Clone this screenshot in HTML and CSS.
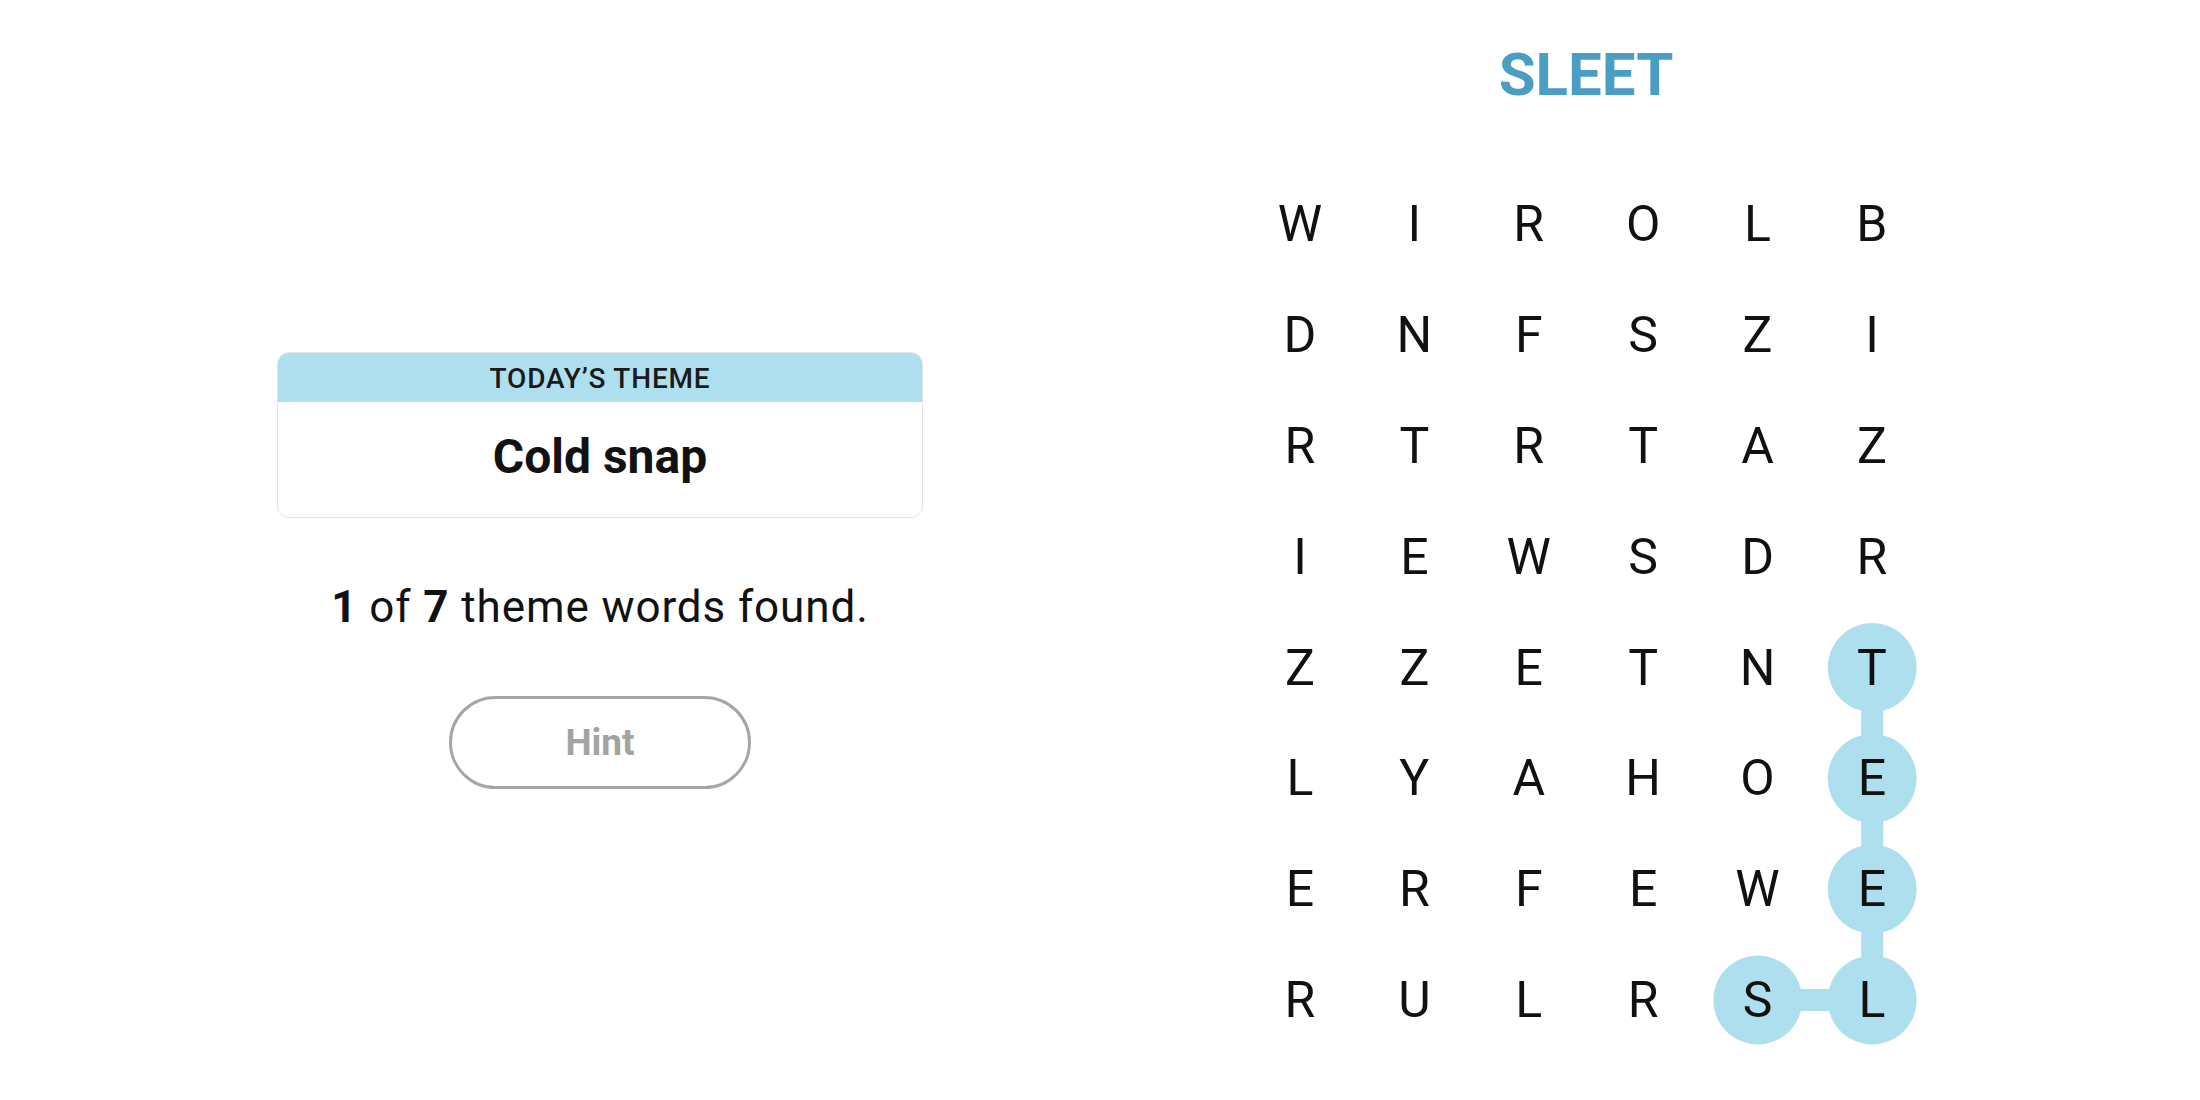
FILE: index.html
```html
<!DOCTYPE html>
<html lang="en">
<head>
<meta charset="utf-8">
<title>Strands</title>
<link rel="stylesheet" href="styles.css">
</head>
<body>
<main class="page">
  <section class="left">
    <div class="theme-card">
      <div class="theme-head">TODAY’S THEME</div>
      <div class="theme-body">Cold snap</div>
    </div>
    <p class="progress"><b>1</b> of <b>7</b> theme words found.</p>
    <button class="hint" type="button">Hint</button>
  </section>
  <section class="right">
    <h1 class="word">SLEET</h1>
    <div class="board">
      <svg class="path" width="686.4" height="886.4" viewBox="0 0 686.4 886.4" aria-hidden="true">
        <polyline points="629.2,498.6 629.2,831 514.8,831" fill="none" stroke="#aedfee" stroke-width="22"/>
        <circle cx="629.2" cy="498.6" r="44.5" fill="#aedfee"/>
        <circle cx="629.2" cy="609.4" r="44.5" fill="#aedfee"/>
        <circle cx="629.2" cy="720.2" r="44.5" fill="#aedfee"/>
        <circle cx="629.2" cy="831" r="44.5" fill="#aedfee"/>
        <circle cx="514.8" cy="831" r="44.5" fill="#aedfee"/>
      </svg>
      <div class="grid">
        <span>W</span><span>I</span><span>R</span><span>O</span><span>L</span><span>B</span>
        <span>D</span><span>N</span><span>F</span><span>S</span><span>Z</span><span>I</span>
        <span>R</span><span>T</span><span>R</span><span>T</span><span>A</span><span>Z</span>
        <span>I</span><span>E</span><span>W</span><span>S</span><span>D</span><span>R</span>
        <span>Z</span><span>Z</span><span>E</span><span>T</span><span>N</span><span>T</span>
        <span>L</span><span>Y</span><span>A</span><span>H</span><span>O</span><span>E</span>
        <span>E</span><span>R</span><span>F</span><span>E</span><span>W</span><span>E</span>
        <span>R</span><span>U</span><span>L</span><span>R</span><span>S</span><span>L</span>
      </div>
    </div>
  </section>
</main>
</body>
</html>
```

FILE: styles.css
```css
* { box-sizing: border-box; }

html, body {
  margin: 0;
  padding: 0;
  background: #ffffff;
}

body {
  width: 2200px;
  height: 1100px;
  overflow: hidden;
  font-family: Roboto, "Liberation Sans", Arial, sans-serif;
  color: #121212;
}

.page {
  display: flex;
  width: 2200px;
  height: 1100px;
}

.left {
  width: 1200px;
  display: flex;
  flex-direction: column;
  align-items: center;
  padding-top: 352px;
}

.theme-card {
  width: 646px;
  height: 166px;
  border: 1.5px solid #e3e3e3;
  border-radius: 12px;
  overflow: hidden;
  display: flex;
  flex-direction: column;
}

.theme-head {
  height: 49px;
  background: #aedfee;
  display: flex;
  align-items: center;
  justify-content: center;
  font-size: 28px;
  font-weight: 500;
  letter-spacing: 0.8px;
  color: #1a1a1a;
  padding-top: 2px;
}

.theme-body {
  flex: 1;
  display: flex;
  align-items: center;
  justify-content: center;
  font-size: 48px;
  font-weight: 700;
  color: #121212;
  padding-bottom: 6px;
}

.progress {
  margin: 64px 0 0;
  font-size: 44px;
  line-height: 51px;
  letter-spacing: 0.9px;
  color: #121212;
}

.progress b {
  font-weight: 700;
}

.hint {
  margin-top: 63px;
  width: 302px;
  height: 93px;
  border: 3px solid #a6a6a6;
  border-radius: 47px;
  background: #ffffff;
  font-family: Roboto, "Liberation Sans", Arial, sans-serif;
  font-size: 37px;
  font-weight: 700;
  color: #a3a3a3;
  padding: 0;
}

.right {
  width: 772px;
  display: flex;
  flex-direction: column;
  align-items: center;
  padding-top: 40px;
}

.word {
  margin: 0;
  font-size: 60px;
  line-height: 70px;
  font-weight: 700;
  color: #4a9dc3;
}

.board {
  position: relative;
  margin-top: 59px;
  width: 686.4px;
  height: 886.4px;
}

.path {
  position: absolute;
  left: 0;
  top: 0;
}

.grid {
  position: relative;
  display: grid;
  grid-template-columns: repeat(6, 114.4px);
  grid-template-rows: repeat(8, 110.8px);
}

.grid span {
  display: flex;
  align-items: center;
  justify-content: center;
  font-size: 50px;
  line-height: 50px;
  color: #111111;
}
```
